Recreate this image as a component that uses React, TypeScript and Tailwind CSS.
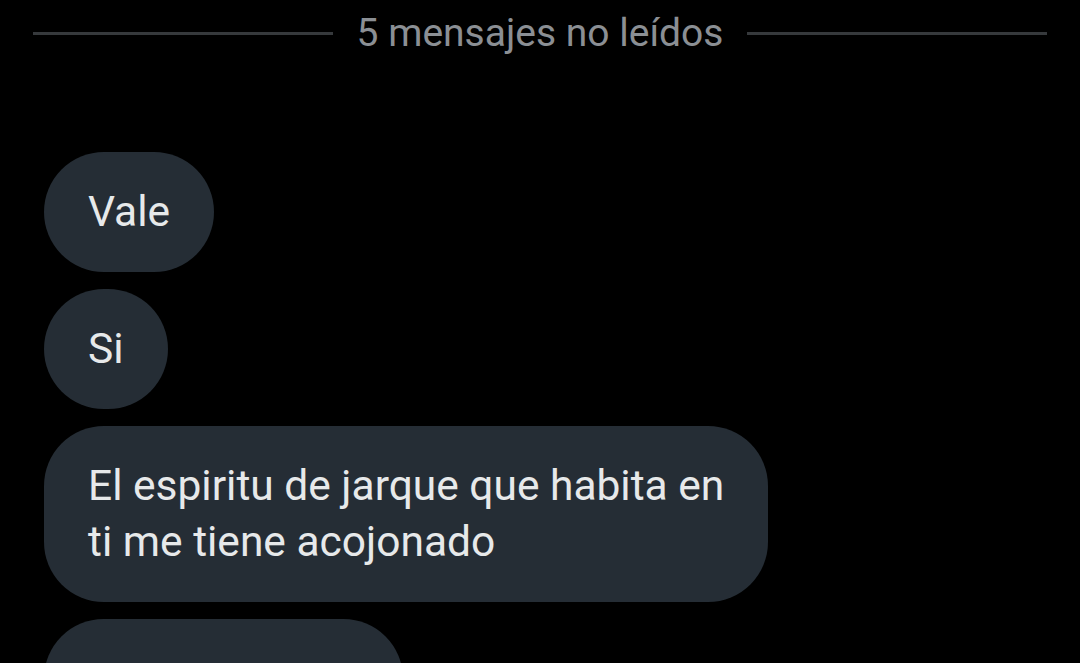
const Bubble = ({ children }: { children: React.ReactNode }) => (
	<div className="w-fit rounded-[60px] bg-[#252d35] px-[44px] py-[32px] text-[42.5px] leading-[56px] text-[#e7e9ea]">
		{children}
	</div>
)

const App = () => {
	return (
		<div
			className="h-[663px] w-[1080px] overflow-hidden bg-black"
			style={{ fontFamily: 'Roboto, "Noto Sans", sans-serif' }}
		>
			{/* unread divider */}
			<div className="flex items-center gap-[24px] px-[33px] pt-[10px]">
				<div className="h-[3px] flex-1 bg-[#36393c]" />
				<span className="text-[39px] leading-[46px] text-[#8b8f94]">5 mensajes no leídos</span>
				<div className="h-[3px] flex-1 bg-[#36393c]" />
			</div>

			<div className="mt-[96px] flex flex-col gap-[17px] px-[44px]">
				<Bubble>Vale</Bubble>
				<Bubble>Si</Bubble>
				<Bubble>
					El espiritu de jarque que habita en
					<br />
					ti me tiene acojonado
				</Bubble>
				<div className="h-[119px] w-[359px] rounded-[60px] bg-[#252d35]" />
			</div>
		</div>
	)
}

export default App
